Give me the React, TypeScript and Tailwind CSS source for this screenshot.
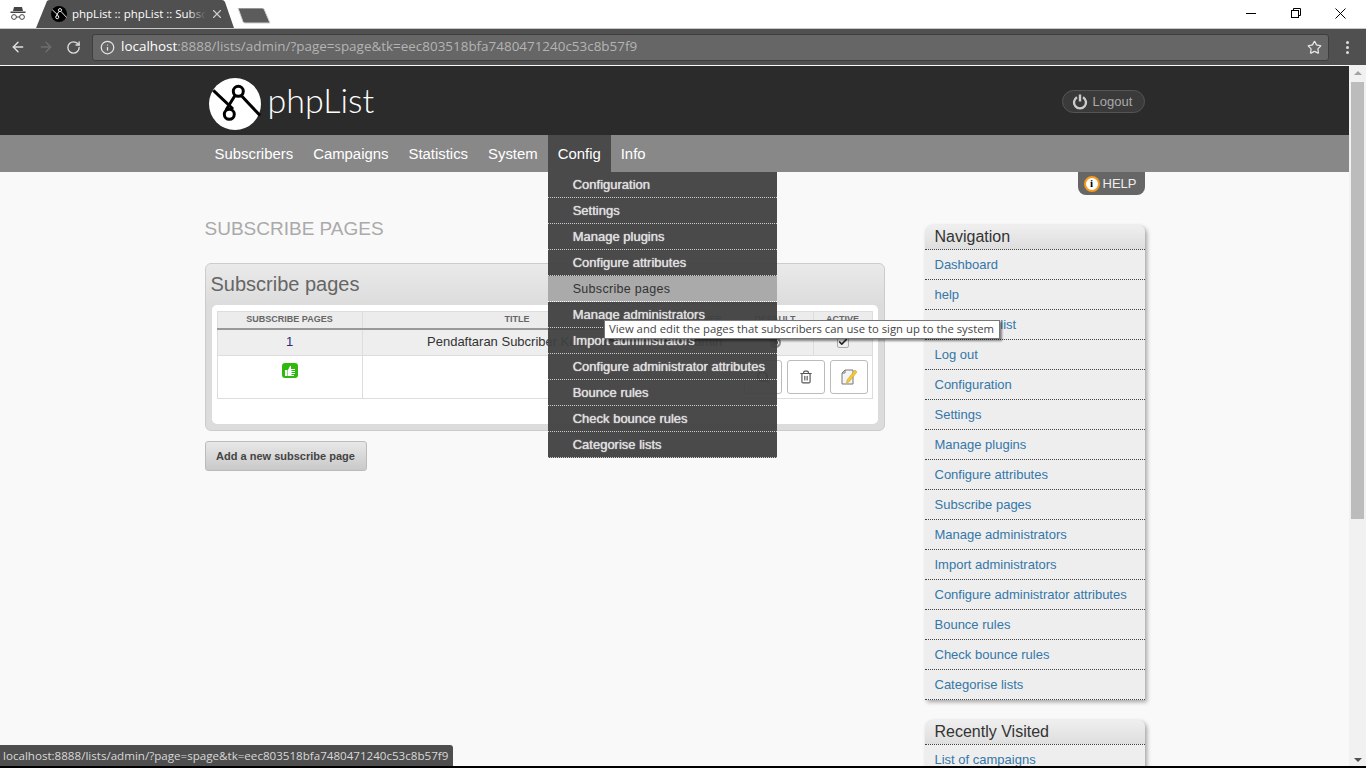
import { ArrowLeft, ArrowRight, RotateCw, Info, Star, X, Trash2, Check, Search } from 'lucide-react';

const configItems = [
  'Configuration',
  'Settings',
  'Manage plugins',
  'Configure attributes',
  'Subscribe pages',
  'Manage administrators',
  'Import administrators',
  'Configure administrator attributes',
  'Bounce rules',
  'Check bounce rules',
  'Categorise lists',
];

const navLinks = [
  'Dashboard',
  'help',
  'Subscriber list',
  'Log out',
  'Configuration',
  'Settings',
  'Manage plugins',
  'Configure attributes',
  'Subscribe pages',
  'Manage administrators',
  'Import administrators',
  'Configure administrator attributes',
  'Bounce rules',
  'Check bounce rules',
  'Categorise lists',
];

const Logo = ({ size, bg, fg }: { size: number; bg: string; fg: string }) => (
  <svg width={size} height={size} viewBox="0 0 52 52" fill="none" stroke={fg} strokeWidth="3">
    <circle cx="26" cy="26" r="26" fill={bg} stroke="none" />
    <path d="M4.3 12.3 L24 31" />
    <path d="M51 37.5 L32.7 18" />
    <circle cx="29.3" cy="13.3" r="5" />
    <circle cx="20.3" cy="36.3" r="5" />
    <path d="M26 17.5 L17 32" />
  </svg>
);

const Incognito = () => (
  <svg width="16" height="16" viewBox="0 0 16 16" fill="#444">
    <path d="M4 2 L12 2 L13 6 L3 6 Z" />
    <rect x="0.5" y="6.5" width="15" height="1.5" />
    <circle cx="4" cy="12" r="2.4" fill="none" stroke="#444" strokeWidth="1" />
    <circle cx="12" cy="12" r="2.4" fill="none" stroke="#444" strokeWidth="1" />
    <rect x="6.4" y="11.5" width="3.2" height="1" />
  </svg>
);

const ThumbBadge = () => (
  <span className="flex h-[15px] w-[16px] items-center justify-center rounded-[3px] bg-[#2fb90f]">
    <svg width="12" height="12" viewBox="0 0 12 12" fill="#fff">
      <rect x="1" y="5" width="2.5" height="6" />
      <path d="M4 5 L6 1 L7 1 L7 4 L11 4 L11 5 L7.5 5 L7.5 6 L11 6 L11 7 L7.5 7 L7.5 8 L11 8 L11 9 L7.5 9 L7.5 10 L10 10 L10 11 L4 11 Z" />
    </svg>
  </span>
);

const EditNote = () => (
  <svg width="18" height="18" viewBox="0 0 18 18">
    <path d="M5 2 H13 V16 H2 V5 Z" fill="#f4f4f4" stroke="#777" strokeWidth="1" />
    <path d="M5 2 V5 H2" fill="none" stroke="#777" strokeWidth="1" />
    <path d="M7 12 L15 2 L17 4 L9 14 L6.5 15 Z" fill="#f2c838" stroke="#c79a16" strokeWidth="0.5" />
  </svg>
);

const Power = () => (
  <svg width="16" height="16" viewBox="0 0 16 16" fill="none" stroke="#ccc">
    <path d="M5 3.2 A6 6 0 1 0 11 3.2" strokeWidth="2.4" />
    <path d="M8 0.5 V7.5" strokeWidth="2.4" />
  </svg>
);

function BrowserChrome() {
  return (
    <div className="shrink-0 font-['Open_Sans',sans-serif]">
      <div className="flex h-[28px] bg-white">
        <div className="flex w-[36px] items-center justify-center pb-[2px]">
          <Incognito />
        </div>
        <div className="relative flex h-[28px] w-[198px] items-center">
          <svg className="absolute inset-0" width="198" height="28" viewBox="0 0 198 28">
            <path d="M0 28 L11 1 Q12 0 14 0 L186 0 Q188 0 189 2 L198 28 Z" fill="#505050" />
          </svg>
          <span className="relative ml-[15px] flex h-[16px] w-[16px] items-center justify-center">
            <Logo size={16} bg="#000" fg="#fff" />
          </span>
          <span className="relative ml-[5px] w-[134px] overflow-hidden whitespace-nowrap text-[11.5px] text-white">
            phpList :: phpList :: Subsc
            <span className="absolute right-0 top-0 h-full w-[18px] bg-gradient-to-r from-transparent to-[#505050]" />
          </span>
          <X className="relative ml-[4px] text-[#ccc]" size={14} strokeWidth={2} />
        </div>
        <div className="ml-[2px] mt-[8px]">
          <svg width="36" height="16" viewBox="0 0 36 16">
            <path d="M2 0 L26 0 Q27 0 28 1 L34 15 L9 15 Q8 15 7 14 Z" fill="#5c5c5c" stroke="#d0d0d0" strokeWidth="1" />
          </svg>
        </div>
        <div className="flex-1" />
        <div className="mr-[3px] flex text-black">
          <div className="flex w-[45px] items-center justify-center pb-[2px]">
            <span className="h-px w-[10px] bg-black" />
          </div>
          <div className="flex w-[45px] items-center justify-center pb-[2px]">
            <svg width="10" height="10" viewBox="0 0 10 10" fill="none" stroke="#000">
              <rect x="0.5" y="2.5" width="7" height="7" />
              <path d="M2.5 2.5 V0.5 H9.5 V7.5 H7.5" />
            </svg>
          </div>
          <div className="flex w-[45px] items-center justify-center pb-[2px]">
            <svg width="11" height="11" viewBox="0 0 11 11" stroke="#000">
              <path d="M0.5 0.5 L10.5 10.5 M10.5 0.5 L0.5 10.5" />
            </svg>
          </div>
        </div>
      </div>
      <div className="flex h-[37px] items-center border-t border-[#c8c8c8] bg-[#505050]">
        <div className="flex w-[92px] items-center pl-[10px]">
          <ArrowLeft className="text-[#e0e0e0]" size={16} strokeWidth={2.2} />
          <ArrowRight className="ml-[12px] text-[#6e6e6e]" size={16} strokeWidth={2.2} />
          <RotateCw className="ml-[12px] text-[#dcdcdc]" size={15} strokeWidth={2.2} />
        </div>
        <div className="flex h-[27px] w-[1237px] items-center rounded-[3px] border border-[#3e3e3e] bg-[#666666] pl-[7px] pr-[6px]">
          <Info className="shrink-0 text-[#e6e6e6]" size={15} strokeWidth={2} />
          <span className="ml-[6px] flex-1 whitespace-nowrap text-[13.45px] leading-none text-[#b4b4b4]">
            <span className="text-white">localhost</span>:8888/lists/admin/?page=spage&amp;tk=eec803518bfa7480471240c53c8b57f9
          </span>
          <Star className="text-[#e6e6e6]" size={15} strokeWidth={2} />
        </div>
        <div className="flex flex-1 flex-col items-center gap-[2px]">
          <span className="h-[3px] w-[3px] rounded-full bg-[#ddd]" />
          <span className="h-[3px] w-[3px] rounded-full bg-[#ddd]" />
          <span className="h-[3px] w-[3px] rounded-full bg-[#ddd]" />
        </div>
      </div>
    </div>
  );
}

function ConfigMenu() {
  return (
    <div className="absolute left-0 top-[37px] z-10 w-[229px] whitespace-nowrap bg-[#404040]/95">
      {configItems.map((item) => {
        const active = item === 'Subscribe pages';
        return (
          <div
            key={item}
            className={
              active
                ? 'h-[26px] border-b border-dotted border-white bg-[#aaaaaa] pl-[25px] text-[12.5px] leading-[26px] tracking-[0.3px] text-[#333]'
                : 'h-[26px] border-b border-dotted border-[#ccc] pl-[25px] text-[13px] leading-[25px] text-[#ddd] [text-shadow:0_0_1px_#fff]'
            }
          >
            {item}
          </div>
        );
      })}
    </div>
  );
}

function SubscribeTable() {
  return (
    <table className="w-[656px] table-fixed border-collapse border border-[#ddd] text-center">
      <thead>
        <tr className="h-[17px] border-b-[2px] border-[#999] bg-[#ececec] text-[9px] uppercase text-[#666]">
          <th className="w-[145px] border-r border-[#ddd] font-bold">Subscribe pages</th>
          <th className="w-[310px] border-r border-[#ddd] font-bold">Title</th>
          <th className="w-[65px] border-r border-[#ddd] font-bold">Owner</th>
          <th className="w-[76px] border-r border-[#ddd] font-bold">Default</th>
          <th className="font-bold">Active</th>
        </tr>
      </thead>
      <tbody>
        <tr className="h-[27px] border-b border-[#ddd] bg-[#eeeeee] text-[13px] text-[#333]">
          <td className="border-r border-[#ddd] pb-[2px] text-[#2a2a7a]">1</td>
          <td className="whitespace-nowrap border-r border-[#ddd] pb-[2px]">Pendaftaran Subcriber Kota Ku</td>
          <td className="border-r border-[#ddd] pb-[2px]">admin</td>
          <td className="border-r border-[#ddd]">
            <span className="mx-auto block h-[11px] w-[11px] rounded-full border-[2px] border-[#888] bg-[#444] [box-shadow:inset_0_0_0_1px_#fff]" />
          </td>
          <td>
            <span className="mx-auto flex h-[12px] w-[12px] items-center justify-center rounded-[2px] border border-[#aaa] bg-[#eee]">
              <Check size={10} strokeWidth={4} className="text-[#222]" />
            </span>
          </td>
        </tr>
        <tr className="h-[43px] bg-white">
          <td className="border-r border-[#ddd] align-top">
            <div className="mt-[7px] flex justify-center">
              <ThumbBadge />
            </div>
          </td>
          <td colSpan={4}>
            <div className="flex justify-end gap-[5px] pr-[4px]">
              <span className="flex h-[34px] w-[38px] items-center justify-center rounded-[3px] border border-[#bbb] bg-white">
                <Search size={14} strokeWidth={3} className="text-[#555]" />
              </span>
              <span className="flex h-[34px] w-[38px] items-center justify-center rounded-[3px] border border-[#bbb] bg-white">
                <Trash2 size={14} className="text-[#555]" />
              </span>
              <span className="flex h-[34px] w-[38px] items-center justify-center rounded-[3px] border border-[#bbb] bg-white">
                <EditNote />
              </span>
            </div>
          </td>
        </tr>
      </tbody>
    </table>
  );
}

function SideBox({ title, links }: { title: string; links: string[] }) {
  return (
    <div className="rounded-t-[7px] bg-[#eeeeee] shadow-[2px_2px_4px_rgba(0,0,0,0.35)]">
      <div className="h-[25px] rounded-t-[7px] border-b border-dotted border-[#444] bg-gradient-to-b from-[#efefef] to-[#dedede] pl-[10px] text-[16px] leading-[23px] text-[#333]">
        {title}
      </div>
      {links.map((link) => (
        <div
          key={link}
          className="h-[30px] border-b border-dotted border-[#444] pl-[10px] text-[13px] leading-[29px] text-[#3577a8]"
        >
          {link}
        </div>
      ))}
    </div>
  );
}

export default function App() {
  return (
    <div className="flex h-[768px] w-[1366px] flex-col overflow-hidden bg-[#f9f9f9] font-['Liberation_Sans',sans-serif]">
      <BrowserChrome />
      <div className="relative flex min-h-0 flex-1">
        <div className="min-w-0 flex-1 overflow-hidden">
          <div className="mt-px flex h-[69px] justify-center bg-[#2b2b2b]">
            <div className="flex w-[940px] items-center justify-between">
              <div className="flex items-center pl-[4px] pt-[7px]">
                <Logo size={52} bg="#fff" fg="#000" />
                <span className="mb-[8px] ml-[7px] font-['Lato',sans-serif] text-[34px] font-light leading-none text-white">phpList</span>
              </div>
              <div className="mt-[2px] flex h-[23px] w-[83px] items-center rounded-full border border-[#555] bg-[#3a3a3a] pl-[9px]">
                <Power />
                <span className="ml-[5px] text-[13px] text-[#a9a9a9]">Logout</span>
              </div>
            </div>
          </div>
          <div className="flex h-[37px] justify-center bg-[#888888]">
            <div className="relative flex h-[37px] w-[940px] text-[14.9px] leading-[38px] text-white">
              <span className="px-[10px]">Subscribers</span>
              <span className="px-[10px]">Campaigns</span>
              <span className="px-[10px]">Statistics</span>
              <span className="px-[10px]">System</span>
              <div className="relative">
                <span className="block h-[37px] bg-[#4a4a4a] px-[10px]">Config</span>
                <ConfigMenu />
              </div>
              <span className="px-[10px]">Info</span>
            </div>
          </div>
          <div className="flex justify-center">
            <div className="w-[940px]">
              <div className="flex justify-end">
                <div className="flex h-[23px] w-[67px] items-center rounded-b-[8px] bg-[#666666] pl-[6px]">
                  <span className="flex h-[16px] w-[16px] items-center justify-center rounded-full border-[2px] border-[#f59a1c] bg-white font-['Liberation_Serif',serif] text-[11px] font-bold leading-none text-black">i</span>
                  <span className="ml-[3px] text-[13px] text-[#eeeeee]">HELP</span>
                </div>
              </div>
              <div className="flex justify-between">
                <div className="w-[680px]">
                  <h1 className="mt-[22px] text-[19px] leading-[24px] text-[#aaaaaa]">SUBSCRIBE PAGES</h1>
                  <div className="mt-[22px] h-[168px] rounded-[6px] border border-[#ccc] bg-gradient-to-b from-[#eaeaea] from-0% to-[#dcdcdc] to-[25%] px-[6px]">
                    <div className="-ml-px text-[20px] leading-[41px] text-[#666]">Subscribe pages</div>
                    <div className="h-[119px] rounded-[5px] bg-white px-[5px] py-[6px]">
                      <SubscribeTable />
                    </div>
                  </div>
                  <button className="mt-[10px] h-[30px] w-[162px] rounded-[3px] border border-[#bbb] bg-gradient-to-b from-[#e8e8e8] to-[#c9c9c9] text-[11px] font-bold text-[#444]">
                    Add a new subscribe page
                  </button>
                </div>
                <div className="mt-[30px] flex w-[220px] flex-col gap-[20px]">
                  <SideBox title="Navigation" links={navLinks} />
                  <SideBox title="Recently Visited" links={['List of campaigns']} />
                </div>
              </div>
            </div>
          </div>
        </div>
        <div className="flex w-[17px] shrink-0 flex-col items-center bg-[#f1f1f1]">
          <span className="mt-[6px] h-0 w-0 border-x-[4px] border-b-[4px] border-x-transparent border-b-[#a3a3a3]" />
          <span className="mt-[7px] h-[437px] w-[13px] bg-[#bcbcbc]" />
          <span className="mb-[6px] mt-auto h-0 w-0 border-x-[4px] border-t-[4px] border-x-transparent border-t-[#505050]" />
        </div>
        <div className="absolute left-[604px] top-[255px] z-20 flex h-[19px] w-[396px] items-center whitespace-nowrap border border-[#777] bg-white pl-[4px] font-['Open_Sans',sans-serif] text-[11.3px] text-[#444] shadow-[2px_2px_2px_rgba(0,0,0,0.45)]">
          View and edit the pages that subscribers can use to sign up to the system
        </div>
        <div className="absolute bottom-[2px] left-0 z-20 flex h-[21px] w-[453px] items-center whitespace-nowrap rounded-tr-[3px] bg-[#4e4e4e] pl-[3px] font-['Open_Sans',sans-serif] text-[11.6px] text-[#d8d8d8]">
          localhost:8888/lists/admin/?page=spage&amp;tk=eec803518bfa7480471240c53c8b57f9
        </div>
        <div className="absolute bottom-0 left-0 z-30 h-[2px] w-full bg-black" />
      </div>
    </div>
  );
}
